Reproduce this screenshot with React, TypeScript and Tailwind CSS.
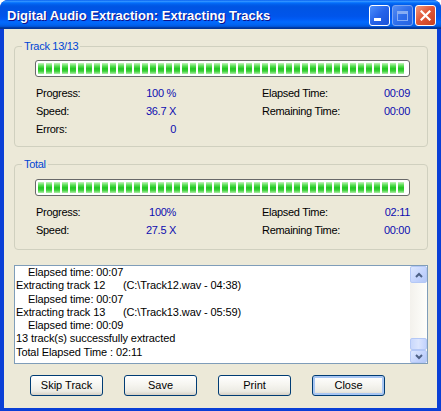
import React from 'react'

const font = { fontFamily: '"Liberation Sans", Arial, sans-serif' }

function ProgressBar() {
  return (
    <div className="w-[375px] h-[17px] border border-[#686868] rounded-[3px] bg-white px-[2px] py-[2px] flex gap-[2px] overflow-hidden">
      {Array.from({ length: 46 }).map((_, i) => (
        <div
          key={i}
          className="w-[6px] h-full shrink-0 bg-[linear-gradient(180deg,#c4f5bd_0%,#5ade55_28%,#22c622_52%,#3ad137_74%,#b0eeaa_100%)]"
        />
      ))}
    </div>
  )
}

interface StatRowProps {
  label: string
  value: string
  label2?: string
  value2?: string
}

function StatRow({ label, value, label2, value2 }: StatRowProps) {
  return (
    <div className="flex h-[18px] items-center">
      <div className="w-[141px] flex justify-between pl-[1px]">
        <span className="text-black">{label}</span>
        <span className="text-[#0c0cb0]">{value}</span>
      </div>
      <div className="w-[86px]" />
      <div className="w-[148px] flex justify-between">
        {label2 && <span className="text-black">{label2}</span>}
        {value2 && <span className="text-[#0c0cb0]">{value2}</span>}
      </div>
    </div>
  )
}

function GroupBox({ title, className, children }: { title: string; className: string; children: React.ReactNode }) {
  return (
    <div className={`relative ml-[10px] w-[414px] border border-[#d0d0bf] rounded-[4px] ${className}`}>
      <span className="absolute left-[7px] top-[-8px] px-[2px] bg-[#ece9d8] text-[#0046d5] leading-[14px]">
        {title}
      </span>
      {children}
    </div>
  )
}

function XpButton({ children, focused }: { children: React.ReactNode; focused?: boolean }) {
  return (
    <button
      className={`w-[73px] h-[21px] border border-[#003c74] rounded-[3px] bg-[linear-gradient(180deg,#ffffff_0%,#f6f5f0_45%,#ecebe4_80%,#d6d0c5_100%)] text-black text-[11px] leading-none ${
        focused ? 'shadow-[inset_0_0_0_2px_#a8c6f3]' : ''
      }`}
    >
      {children}
    </button>
  )
}

function ScrollButton({ up, h }: { up?: boolean; h: string }) {
  return (
    <div className={`w-[17px] ${h} rounded-[2px] border border-[#b4c8f6] bg-[linear-gradient(135deg,#dde8fe_0%,#c3d3fd_60%,#b4c8f6_100%)] flex items-center justify-center`}>
      <svg width="8" height="6" viewBox="0 0 8 6">
        {up ? (
          <path d="M1 5 L4 2 L7 5" fill="none" stroke="#4d6185" strokeWidth="2" />
        ) : (
          <path d="M1 1 L4 4 L7 1" fill="none" stroke="#4d6185" strokeWidth="2" />
        )}
      </svg>
    </div>
  )
}

const logLines: { text: string; indent?: boolean }[] = [
  { text: 'Elapsed time: 00:07', indent: true },
  { text: 'Extracting track 12      (C:\\Track12.wav - 04:38)' },
  { text: 'Elapsed time: 00:07', indent: true },
  { text: 'Extracting track 13      (C:\\Track13.wav - 05:59)' },
  { text: 'Elapsed time: 00:09', indent: true },
  { text: '13 track(s) successfully extracted' },
  { text: 'Total Elapsed Time : 02:11' },
]

export default function App() {
  return (
    <div className="w-[441px] h-[411px] bg-[#0a3fd6] rounded-t-[8px] flex flex-col overflow-hidden" style={font}>
      {/* Title bar */}
      <div className="h-[29px] shrink-0 flex items-center pl-[7px] pr-[5px] bg-[linear-gradient(180deg,#0058ee_0%,#3593ff_4%,#288eff_6%,#127dff_8%,#036ffc_10%,#0262ee_14%,#0057e5_20%,#0054e3_24%,#0055eb_56%,#005bf5_66%,#026afe_76%,#0062ef_86%,#0052d6_92%,#0040ab_94%,#003092_100%)]">
        <span className="text-white font-bold text-[13px] leading-none pt-[1px] [text-shadow:1px_1px_#0f1089]">
          Digital Audio Extraction: Extracting Tracks
        </span>
        <div className="ml-auto flex gap-[2px] mt-[2px]">
          <div className="w-[21px] h-[21px] rounded-[3px] border border-white bg-[linear-gradient(135deg,#4d8ffc_0%,#2663e9_50%,#1a52d8_100%)] flex items-end justify-start">
            <div className="w-[7px] h-[3px] bg-white ml-[4px] mb-[4px]" />
          </div>
          <div className="w-[21px] h-[21px] rounded-[3px] border border-[#9cb8f3] bg-[linear-gradient(135deg,#6b9cf8_0%,#3b73ea_50%,#2e62dc_100%)] flex items-center justify-center opacity-80">
            <div className="w-[11px] h-[10px] border border-[#a9c2f5] border-t-[3px]" />
          </div>
          <div className="w-[21px] h-[21px] rounded-[3px] border border-white bg-[linear-gradient(135deg,#f39a7d_0%,#e0583a_45%,#c7401f_100%)] flex items-center justify-center">
            <svg width="11" height="11" viewBox="0 0 11 11">
              <path d="M1.5 1.5 L9.5 9.5 M9.5 1.5 L1.5 9.5" stroke="white" strokeWidth="2.2" strokeLinecap="square" />
            </svg>
          </div>
        </div>
      </div>

      {/* Client area */}
      <div className="flex-1 mx-[4px] mb-[3px] bg-[#ece9d8] text-[11px] tracking-[-0.3px] flex flex-col">
        <GroupBox title="Track 13/13" className="mt-[17px] h-[101px]">
          <div className="pl-[20px] pt-[13px]">
            <ProgressBar />
            <div className="mt-[7px]">
              <StatRow label="Progress:" value="100 %" label2="Elapsed Time:" value2="00:09" />
              <StatRow label="Speed:" value="36.7 X" label2="Remaining Time:" value2="00:00" />
              <StatRow label="Errors:" value="0" />
            </div>
          </div>
        </GroupBox>

        <GroupBox title="Total" className="mt-[17px] h-[86px]">
          <div className="pl-[20px] pt-[14px]">
            <ProgressBar />
            <div className="mt-[7px]">
              <StatRow label="Progress:" value="100%" label2="Elapsed Time:" value2="02:11" />
              <StatRow label="Speed:" value="27.5 X" label2="Remaining Time:" value2="00:00" />
            </div>
          </div>
        </GroupBox>

        {/* Log */}
        <div className="mt-[15px] ml-[10px] w-[414px] h-[99px] border border-[#7f9db9] bg-white flex">
          <div className="flex-1 pl-[1px] text-black leading-[13.3px] tracking-[-0.1px] overflow-hidden">
            {logLines.map((l, i) => (
              <div key={i} className={`whitespace-pre ${l.indent ? 'pl-[12px]' : ''}`}>
                {l.text}
              </div>
            ))}
          </div>
          <div className="w-[17px] flex flex-col bg-[linear-gradient(90deg,#f3f1ec_0%,#fefefb_100%)]">
            <ScrollButton up h="h-[17px]" />
            <div className="flex-1" />
            <div className="w-[17px] h-[12px] rounded-[2px] border border-[#b4c8f6] bg-[linear-gradient(90deg,#c9d8fc_0%,#dbe5fe_50%,#c3d3fd_100%)]" />
            <ScrollButton h="h-[13px]" />
          </div>
        </div>

        {/* Buttons */}
        <div className="mt-[11px] ml-[26px] flex gap-[21px] tracking-normal">
          <XpButton>Skip Track</XpButton>
          <XpButton>Save</XpButton>
          <XpButton>Print</XpButton>
          <XpButton focused>Close</XpButton>
        </div>
      </div>
    </div>
  )
}
